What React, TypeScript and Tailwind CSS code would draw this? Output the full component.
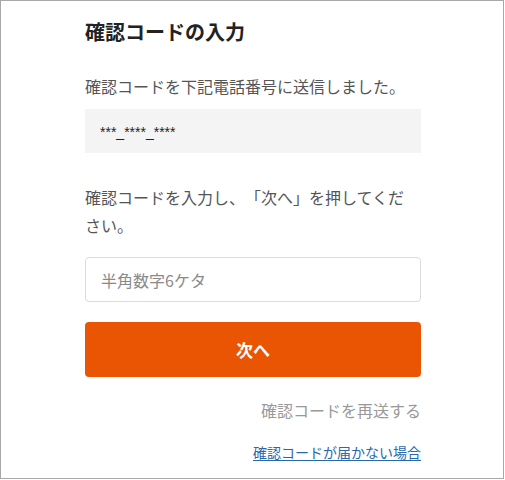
export default function App() {
  const font = { fontFamily: '"Noto Sans CJK JP", "Noto Sans", sans-serif' };
  return (
    <div className="w-[504px] h-[479px] border border-[#a8a8a8] bg-white" style={font}>
      <div className="w-[336px] ml-[84px] pt-[17px] flex flex-col">
        <h1 className="text-[20px] leading-[28px] font-bold text-[#222]">確認コードの入力</h1>
        <p className="mt-[28px] text-[16px] leading-[24px] text-[#555]">確認コードを下記電話番号に送信しました。</p>
        <div className="mt-[11px] h-[44px] bg-[#f4f4f4] px-[15px] pt-[9px]">
          <span className="text-[14px] leading-[20px] text-[#222] font-['Liberation_Sans',Arial,sans-serif]">***_****_****</span>
        </div>
        <p className="mt-[30px] text-[16px] leading-[28px] text-[#555] [text-spacing-trim:space-all]">
          確認コードを入力し、「次へ」を押してくだ
          <br />
          さい。
        </p>
        <input
          className="mt-[18px] h-[45px] w-full rounded-[4px] border border-[#dcdcdc] px-[15px] text-[16px] text-[#333] placeholder:text-[#8a8a8a] outline-none"
          placeholder="半角数字6ケタ"
          style={font}
        />
        <button
          className="mt-[20px] h-[55px] w-full rounded-[4px] bg-[#ea5504] text-white text-[17px] font-bold"
          style={font}
        >
          次へ
        </button>
        <div className="mt-[21px] text-right text-[16px] leading-[24px] text-[#999]">確認コードを再送する</div>
        <div className="mt-[20px] text-right text-[14px] leading-[20px]">
          <a className="text-[#2968ad] underline underline-offset-[2px]" href="#">確認コードが届かない場合</a>
        </div>
      </div>
    </div>
  );
}
